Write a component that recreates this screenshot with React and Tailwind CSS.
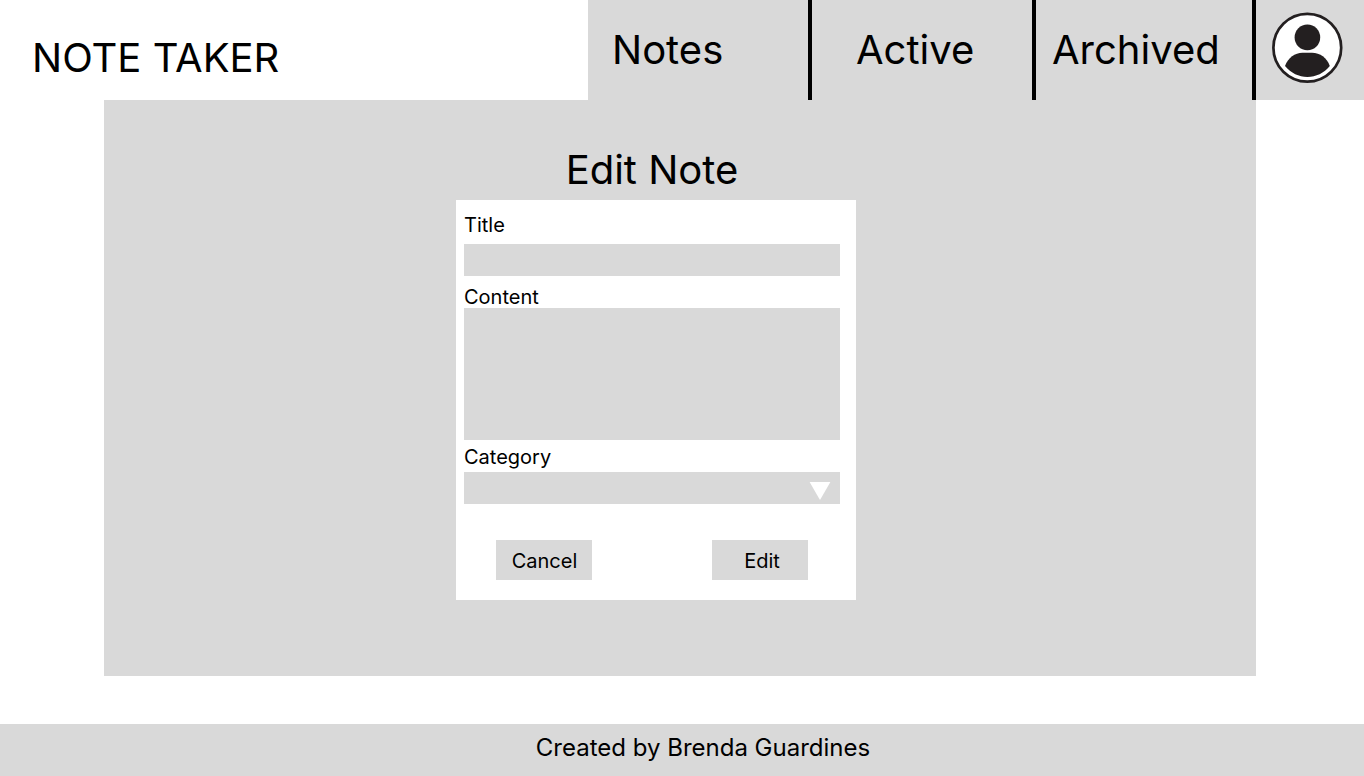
export default function App() {
  return (
    <div className="flex min-h-screen flex-col bg-white font-['Inter',sans-serif] text-black">
      <header className="flex h-[100px]">
        <h1 className="flex-1 pt-[34px] pl-8 text-[40px] leading-[48px]">NOTE TAKER</h1>
        <nav className="flex bg-[#d9d9d9] text-[40px] leading-[48px]">
          <a href="#notes" className="w-[224px] border-r-4 border-black pt-[26px] pl-6">Notes</a>
          <a href="#active" className="w-[224px] border-r-4 border-black pt-[26px] pl-11">Active</a>
          <a href="#archived" className="w-[220px] border-r-4 border-black pt-[26px] pl-4">Archived</a>
          <a href="#profile" aria-label="Profile" className="w-[108px] pt-3 pl-4">
            <svg viewBox="0 0 72 72" className="size-[72px]" aria-hidden="true">
              <circle cx="35.300" cy="35.800" r="33.900" fill="#fff" stroke="#231f20" strokeWidth="2.700" />
              <circle cx="35.400" cy="25.400" r="12.800" fill="#231f20" />
              <path d="M13 54C16 46 23 40.800 30.500 40.800H40C48 40.800 55 46 57.800 54C52 61 44 65 35.400 65S19 61 13 54Z" fill="#231f20" />
            </svg>
          </a>
        </nav>
      </header>
      <main className="mr-[108px] ml-[104px] flex min-h-[576px] flex-col items-center bg-[#d9d9d9] pt-[46px]">
        <h2 className="mr-14 text-[40px] leading-[48px]">Edit Note</h2>
        <form className="mt-[6px] mr-12 flex h-[400px] w-[400px] flex-col bg-white pt-3 pr-4 pl-2 text-xl leading-6">
          <label htmlFor="title" className="pt-px">Title</label>
          <input id="title" type="text" className="mt-[7px] h-8 bg-[#d9d9d9] px-2" />
          <label htmlFor="content" className="mt-2 h-6 pt-px">Content</label>
          <textarea id="content" className="h-[132px] resize-none bg-[#d9d9d9] px-2" />
          <label htmlFor="category" className="mt-1 h-6 pt-px">Category</label>
          <div className="relative mt-1 flex">
            <select id="category" className="h-8 flex-1 appearance-none bg-[#d9d9d9] px-2">
              <option></option>
            </select>
            <svg viewBox="0 0 22 18" className="pointer-events-none absolute top-[10px] right-[9px] h-[18px] w-[22px]" aria-hidden="true">
              <path d="M0.600 0H21.400L11 18Z" fill="#fff" />
            </svg>
          </div>
          <div className="mt-9 flex justify-between px-8">
            <button type="button" className="h-10 w-24 bg-[#d9d9d9] pt-0.5 pl-px">Cancel</button>
            <button type="submit" className="h-10 w-24 bg-[#d9d9d9] pt-0.5 pl-1">Edit</button>
          </div>
        </form>
      </main>
      <footer className="mt-auto h-[52px] bg-[#d9d9d9] pt-[9px] pl-[42px] text-center text-2xl leading-[29px]">
        Created by Brenda Guardines
      </footer>
    </div>
  );
}
